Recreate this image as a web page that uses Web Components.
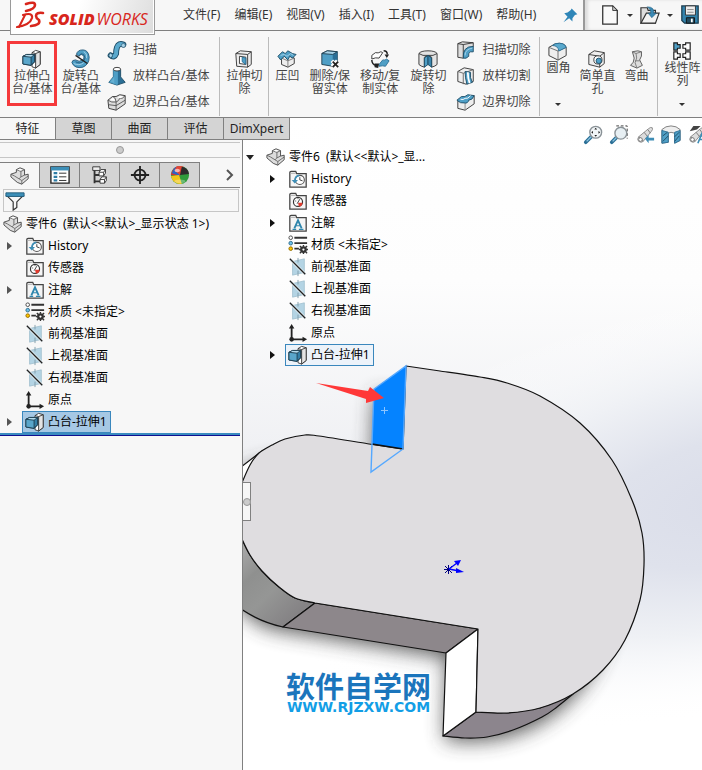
<!DOCTYPE html>
<html lang="zh-CN">
<head>
<meta charset="utf-8">
<title>SOLIDWORKS</title>
<style>
  html, body { margin: 0; height: 100%; }
  body {
    font: 12px/16px "Noto Sans", "Noto Sans CJK SC", sans-serif;
    color: #111; background: #f7f7f7;
    --line: #808080; --soft: #c6c6c6; --panel: #f7f7f7; --tab: #d4d4d4;
  }
</style>
</head>
<body>
<sw-app></sw-app>
<script>
const B = '#4f9fc6', L = '#a9d3e8', D = '#2b6f96', K = '#333';
const plane = `<path d="M4 4l13-3v15l-13 3z" fill="#b4d4e4" stroke="#9dbdcc" stroke-width=".8"/><path d="M10 0v5M10 14v6" stroke="#7f9aa8" fill="none"/><path d="M2 2L18 18" stroke="#e8f0f4" stroke-width="3"/><path d="M1 1L18 18" stroke="#222" stroke-width="1.400"/>`;
const folder = inner => `<path d="M1 19V3q0-1.500 1.500-1.500h5l1 2.500H19v15z" fill="#f5f5f5" stroke="#444" stroke-width="1.400"/><path d="M2 3h5l1 1.500H2z" fill="#bbb"/>${inner}`;
const glass = `<path d="M9 11L2 18" stroke="#2b6f96" stroke-width="4" stroke-linecap="round"/><path d="M8 12L3 17" stroke="#8cc4e0" stroke-width="1.500"/>`;
const scope = `<path d="M3 12L14 3q2-2 4-1 1 2-1 4L8 17q-2 2-5 0-2-2 0-5z" fill="#ddd" stroke="#888"/><path d="M9 7l4 5M13 4l3 4M3 12q4 1 5 5" stroke="#777" fill="none"/><circle cx="5" cy="15" r="2" fill="#fff" stroke="#777"/>`;
const ICONS = {
  extrude: `<path d="M10 3l4-2.500L19 2v14l-5 4-4-1.500z" fill="#fff" stroke="${K}"/><path d="M14 4l5-2v14l-5 4z" fill="#e4e4e4" stroke="${K}"/><path d="M10 3l4 1" stroke="${K}"/><path d="M0 7l4-2h9v8l-4 4-9-1.500z" fill="#357fa6" stroke="#1d3e50"/><path d="M0 7l9 1v9l-9-1.500z" fill="#5aa6ca"/><path d="M0 7l4-2h9L9 8z" fill="#b4dbed"/><path d="M0 7l4-2h9v8l-4 4-9-1.500zM0 7l9 1v9M9 8l4-3" stroke="#1d3e50"/>`,
  revolve: `<path d="M5 5Q6 0 12 0t7 8q0 8-7 11Q3 21 0 14q0-3 4-3 4 3 8 0 2-2 1-4-3-4-5 0z" fill="${B}" stroke="#23597a"/><path d="M8 6q2-3 5-1 3 4 0 7-4 4-9 1" stroke="#23597a" fill="none"/><path d="M13 2q4 2 3 7M2 15q6 3 11-1" stroke="${L}" fill="none"/><path d="M4 6L17 15" stroke="#222" stroke-width="1.400"/>`,
  sweep: `<path d="M3 16q4 3 6-2 0-4 1-7 2-5 7-3" fill="none" stroke="#1d4c66" stroke-width="6.500" stroke-linecap="round"/><path d="M3 16q4 3 6-2 0-4 1-7 2-5 7-3" fill="none" stroke="#5aa9cd" stroke-width="4.500" stroke-linecap="round"/><ellipse cx="3" cy="16" rx="2" ry="2.500" fill="${L}" stroke="#1d4c66"/><circle cx="17" cy="5" r="2.200" fill="${L}" stroke="#1d4c66" stroke-width=".6"/>`,
  loft: `<path d="M6 3h8v8l5 6-9 3-9-3 5-6z" fill="${D}" stroke="#1d4c66"/><path d="M6 3h5v16l-1 1-9-3 5-6z" fill="${B}"/><path d="M3 16l4-5v7z" fill="#66b0d2"/><ellipse cx="10" cy="2.500" rx="4" ry="2" fill="#fff" stroke="${K}"/>`,
  boundary: `<path d="M0 8l5-4q4 1 8-2l6 1v9l-10 7-8-2z" fill="#ddd" stroke="${K}"/><path d="M0 8q4 3 9 2 3-1 4-4 3 1 6-3M9 10v9M5 4q4 1 4 6M1 13l8 1 10-6" fill="none" stroke="#555"/><path d="M2 8l4-3 2 4zM10 5l4-2 3 1-3 2z" fill="#fff"/>`,
  cut: `<path d="M1 4l5-3 12 1v14l-4 3-12-1z" fill="#eee" stroke="${K}"/><path d="M1 4l13 1v14M14 5l4-3" fill="none" stroke="${K}"/><path d="M5 7l7 1v8l-7-1z" fill="#fff" stroke="${K}"/><path d="M8 8l4 1v7l-4-3z" fill="${B}" stroke="${D}"/>`,
  indent: `<path d="M4 9l6-4 8 4v6l-7 4-7-3z" fill="#eee" stroke="${K}"/><path d="M11 11v8M4 9l7 3 7-3" stroke="#777" fill="none"/><path d="M0 7l5-5 3 2 3-3 5 3 4 1-4 4-3-2-2 4-4-4-4 4z" fill="${B}" stroke="#1d4c66"/><path d="M3 6l4-1 3 2 4-3 3 2" stroke="${L}" fill="none"/>`,
  del: `<path d="M1 4l6-3 11 1v12l-5 4-12-2z" fill="${B}" stroke="#1d3e50"/><path d="M13 5l5-3v12l-5 4z" fill="${D}"/><path d="M1 4l6-3 11 1-5 3z" fill="${L}" stroke="#1d3e50"/><path d="M12 12l6 6M18 12l-6 6" stroke="#fff" stroke-width="4"/><path d="M13 13l6 6M19 13l-6 6" stroke="#222" stroke-width="2"/>`,
  move: `<path d="M1 6l4-3q3 1 6-1l2 1-4 6q-4-1-8 1z" fill="#fff" stroke="${K}"/><path d="M9 16l4-5q3 1 4-1l3 2-4 6q-3-1-7 0z" fill="${B}" stroke="${D}"/><path d="M14 1q4 0 4 4" fill="none" stroke="#222" stroke-width="1.600"/><path d="M15 5h5l-2.500 4zM4 15l5 0-1 5-4-1z" fill="#222"/><path d="M1 11q0 5 5 6" fill="none" stroke="#222" stroke-width="1.600"/>`,
  revcut: `<path d="M0 4q2-3 10-3t10 3v12q-2 2-6 3V8l-4-2-4 2v11q-4-1-6-3z" fill="#e3e3e3" stroke="${K}"/><path d="M0 4q4 3 10 2 6 1 10-2" fill="none" stroke="${K}"/><path d="M6 9l4-3v10l-4 3z" fill="${B}" stroke="#1d4c66"/><path d="M10 6l4 3v10l-4-3z" fill="#3b86ad" stroke="#1d4c66"/>`,
  swcut: `<path d="M1 3l5-2 12 1v4L7 19l-6-1z" fill="#ddd" stroke="${K}"/><path d="M1 3l6 1 11-2M7 4v14" stroke="${K}" fill="none"/><path d="M7 19Q6 6 18 6v6h-3q-3 1-2 5l-3 2z" fill="${B}" stroke="#1d4c66"/><path d="M9 16q0-7 8-8" stroke="${L}" fill="none"/>`,
  loftcut: `<path d="M1 5l7-4 10 2v13l-8 3-9-3z" fill="#eee" stroke="${K}"/><path d="M1 5l6 2v12M7 7l11-4" fill="none" stroke="#666"/><path d="M9 5l6 1q-1 6 2 11l-6 2q-2-7-2-14z" fill="${B}" stroke="#1d4c66"/><path d="M12 6q0 7 2 12" stroke="#fff" stroke-width="2" fill="none"/>`,
  boundcut: `<path d="M1 9l18-6v9l-10 7-8-2z" fill="#eee" stroke="${K}"/><path d="M9 11v8" stroke="#888"/><path d="M0 8l5-4q4 1 7-2l7 1q-2 5-6 5-1 4-5 3-4 1-8-3z" fill="${B}" stroke="#1d4c66"/><path d="M4 7q3 1 5-1 3 1 6-3" fill="none" stroke="#fff"/>`,
  fillet: `<path d="M0 6l7-4q10-2 12 4v9l-9 5-10-5z" fill="#eee" stroke="${K}"/><path d="M0 6l10 4v10M10 10l9-4" fill="none" stroke="#666"/><path d="M7 2q10-2 12 4l-8 4Q10 4 4 4z" fill="#5aa9cd" stroke="${D}"/>`,
  hole: `<path d="M1 5l6-4 11 2v12l-5 4-12-3z" fill="#eee" stroke="${K}"/><path d="M1 5l12 2v12M13 7l5-4" fill="none" stroke="${K}"/><circle cx="11" cy="11" r="4.500" fill="#fff" stroke="${K}"/><circle cx="12" cy="12" r="3" fill="${B}" stroke="#1d4c66"/>`,
  flex: `<path d="M6 2l6-1 4 1q1 5-2 9l3 6-6 3-7-3q4-3 4-8z" fill="#ddd" stroke="#555"/><path d="M6 2l4 2q2 5-1 10l2 6M10 4l6-2M9 12l5 0" fill="none" stroke="#777"/>`,
  pattern: `<path d="M1 1h4v2h3v4H5v2H1z" fill="${B}" stroke="#222" stroke-width="1.300"/><path d="M11 3h3V1h5v8h-5V7h-3zM1 11h4v2h3v4H5v2H1zM11 13h3v-2h5v8h-5v-2h-3z" fill="#fff" stroke="#222" stroke-width="1.300"/>`,
  pin: `<path d="M12 2l7 7-3 1-3 4v4l-4-4-7 5 5-7-4-4 4-1 4-3z" fill="#2f86b8"/>`,
  new: `<path d="M2 0h11l5 5v15H2z" fill="#fafafa" stroke="${K}" stroke-width="1.400"/><path d="M13 0v5h5z" fill="#ccc" stroke="${K}"/>`,
  open: `<path d="M0 19V2h7l1 3h8v14z" fill="#ddd" stroke="${K}" stroke-width="1.300"/><path d="M0 19L6 8h14l-4 11z" fill="#f3f3f3" stroke="${K}" stroke-width="1.300"/><path d="M7 1q8 0 7 7h3l-5 5-4-5h3q0-4-4-7z" fill="#3b89b4" stroke="#215f80" stroke-width=".6"/>`,
  save: `<path d="M1 0h18v19H4l-3-3z" fill="#3383ac" stroke="#1d3e50" stroke-width="1.400"/><path d="M5 0h11v10H5z" fill="#eee" stroke="#333"/><path d="M7 4h7M7 7h7" stroke="#888"/><path d="M6 13h9v6H6z" fill="#234c60" stroke="#111"/><path d="M12 14v4" stroke="#fff" stroke-width="2"/>`,
  part: `<path d="M0 8l6-2V3l4-2 5 2v6l4-1v5l-7 6-5-2-7-6z" fill="#ddd" stroke="#444"/><path d="M6 3l5 2v6l-2 2M11 5l4-2M11 11l4-2M0 8l4 2 8 5 7-5M12 15v4" fill="none" stroke="#666"/><path d="M7 3l3-1 3 1-3 1z" fill="#fff"/>`,
  props: `<path d="M0 1h20v18H0z" fill="#fff" stroke="#222" stroke-width="1.500"/><path d="M0 1h20v4H0z" fill="#3c8fb8"/><path d="M3 8h4M3 12h4M3 16h4" stroke="#2f7da6" stroke-width="2.500"/><path d="M9 8h8M9 12h8M9 16h8" stroke="#222"/>`,
  config: `<path d="M4 2v17M4 10h6M4 17h7" stroke="#333" stroke-width="2" fill="none"/><path d="M2 1h8v4H2z" fill="#eee" stroke="#333"/><path d="M9 7l2-3h5v4l-2 3H9zM10 15l2-3h5v4l-2 3h-5z" fill="#fff" stroke="#333"/><path d="M9 7h5v4M14 7l2-3M10 15h5v4M15 15l2-3" fill="none" stroke="#333"/>`,
  target: `<circle cx="10" cy="10" r="6" fill="none" stroke="#222" stroke-width="2"/><path d="M10 0v20M0 10h20" stroke="#222" stroke-width="2"/>`,
  ball: `<circle cx="10" cy="10" r="10" fill="#2f9c3b"/><path d="M10 11L0 10Q1 2 8 0q5 3 2 11z" fill="#d9322b"/><path d="M10 11L1 8q2-6 5-7z" fill="#2c65c4"/><path d="M6 1q5-2 8 0-1 6-4 9l-6-5z" fill="#e34537"/><path d="M10 10L12 1q7 1 8 8z" fill="#2c2c2c"/><path d="M0 11l9-1 3 10Q2 20 0 11z" fill="#f2c61b"/><ellipse cx="7" cy="5" rx="3" ry="2" fill="#fff" opacity=".6"/><ellipse cx="10" cy="17" rx="6" ry="2" fill="#fff" opacity=".3"/>`,
  filter: `<path d="M1 4l7 7v9l4-3v-6l7-7z" fill="#f7f7f7" stroke="#333" stroke-width="1.300"/><path d="M0 1h20v4H0z" fill="#3c8fb8" stroke="#205a79"/>`,
  history: folder(`<circle cx="12" cy="11" r="5" fill="#fff" stroke="#555" stroke-width="1.200"/><path d="M12 8v3l3 1" stroke="#333"/><path d="M6.500 12q0-5 5-6" stroke="#3d8eb6" stroke-width="1.800"/><path d="M3 11h7l-3.500 4z" fill="#3d8eb6"/>`),
  sensor: folder(`<circle cx="10" cy="11" r="5" fill="#fff" stroke="#333" stroke-width="1.300"/><path d="M10 12h5q0 4-4 4z" fill="#e23a2d"/><path d="M9 13l3-5M7 10h1M10 7v1" stroke="#333"/>`),
  note: folder(`<path d="M6 16l4-9 4 9" stroke="#2f86ad" stroke-width="2"/><path d="M7 13h6M4 17h4M11 17h5" stroke="#2f86ad" stroke-width="1.200"/>`),
  material: `<path d="M6 2h14M6 8h14M6 14h5" stroke="#333" stroke-width="2"/><circle cx="2" cy="2" r="2" fill="#fff" stroke="#444"/><circle cx="2" cy="8" r="2" fill="#6dc1ec" stroke="#2f6d8c"/><circle cx="2" cy="14" r="2" fill="#ffc400" stroke="#8f6a00"/><circle cx="16" cy="15" r="2.500" fill="#fff" stroke="#333" stroke-width="2.500"/><path d="M16 10v2M16 18v2M11 15h2M19 15h2M12 11l2 2M18 17l2 2M12 19l2-2M18 13l2-2" stroke="#333" stroke-width="1.500"/>`,
  plane,
  origin: `<path d="M3 3v14h14" stroke="#222" stroke-width="2"/><path d="M0 5l3-5 3 5zM15 14l5 3-5 3z" fill="#222"/><circle cx="3" cy="17" r="2.500" fill="#222"/>`,
  zoomfit: `${glass}<circle cx="13" cy="7" r="6.500" fill="#f1f5f7" stroke="#8a9297" stroke-width="1.500"/><path d="M13 2l1.500 2h-3zM13 12l1.500-2h-3zM8 7l2-1.500v3zM18 7l-2-1.500v3z" fill="#222"/>`,
  zoomarea: `<path d="M7 0h12v14" stroke="#333" stroke-dasharray="3 2"/>${glass}<circle cx="12" cy="8" r="6.500" fill="#e7eff3" stroke="#8a9297" stroke-width="1.500"/>`,
  prev: `${scope}<path d="M10 14l4-4v3h6v3h-6v3z" fill="#3f8db5"/>`,
  section: `<path d="M0 4q4-4 10-4t10 4v12l-6 3V8l-4-1-3 1v10l-7 1z" fill="#eee" stroke="#777"/><path d="M0 5l7 2v11l-7 1z" fill="${B}" stroke="${D}"/><path d="M14 7l6-2v11l-6 3z" fill="${B}" stroke="${D}"/><path d="M1 11l5-4M1 17l6-6M14 12l5-5M14 17l5-6" stroke="#1d4c66"/>`,
  viewA: `${scope}<path d="M2 6l4-6h8l-4 4z" fill="#444"/><path d="M11 19l4-10 4 10M13 15h5" stroke="#3f8db5" stroke-width="1.800"/>`
};

function define(tag, css, html) {
  const tpl = document.createElement('template');
  tpl.innerHTML = `<style>*{box-sizing:border-box}button{font:inherit;color:inherit;background:none;border:0;padding:0;margin:0;text-align:inherit}${css}</style>`;
  customElements.define(tag, class extends HTMLElement {
    connectedCallback() {
      if (this.shadowRoot) return;
      const root = this.attachShadow({ mode: 'open' });
      root.append(tpl.content.cloneNode(true));
      const body = document.createElement('template');
      body.innerHTML = typeof html === 'function' ? html(this) : html;
      root.append(body.content);
    }
  });
}

define('sw-icon', ':host{display:block;flex:none;width:20px;height:20px}svg{display:block;width:100%;height:100%}',
  el => `<svg viewBox="-1 -1 22 22" fill="none" aria-hidden="true">${ICONS[el.getAttribute('name')]}</svg>`);

define('sw-logo', `
  :host{display:flex;align-items:center;gap:4px;width:145px;height:35px;padding:4px 0 0 4px;border:1px solid #9a9a9a;border-top:0;
    background:linear-gradient(110deg,#fff 45%,#dcdcdc);color:#d8261c;box-shadow:inset -1px -1px #fff}
  svg{flex:none;width:30px;height:30px;margin-top:-6px}
  p{display:flex;gap:2px;margin:0;font:italic 16px/20px "Open Sans",sans-serif;white-space:nowrap}
  b{font-weight:800}
  span{font-weight:400}`,
  `<svg viewBox="0 0 30 30" aria-hidden="true"><g fill="none" stroke="#d8261c" stroke-linecap="round" stroke-linejoin="round">
    <path d="M11 3Q20 0 20 4T11 10" stroke-width="2.600"/><path d="M8 14q10-3 9 3-2 7-15 9" stroke-width="2.200"/><path d="M10 14L4 26" stroke-width="2"/>
    <path d="M28 12q-7-1-7 3 0 2 3 4 2 5-8 6" stroke-width="2.600"/></g></svg>
   <p><b>SOLID</b><span>WORKS</span></p>`);

define('sw-menubar', `
  :host{display:flex;height:31px;border-bottom:1px solid var(--line);color:#333;position:relative}
  sw-logo{position:absolute;left:10px;top:0;z-index:2}
  nav{display:flex;flex:1;align-items:center;gap:14px;padding-left:183px;white-space:nowrap;min-width:0}
  sw-icon.pin{width:18px;height:18px;margin-left:11px}
  .quick{display:flex;align-items:center;gap:7px;flex:none;width:119px;padding-left:15px;border-left:2px solid #999;box-shadow:inset 3px 0 3px #ddd;overflow:hidden}
  button{flex:none} i{display:block;border:solid transparent;border-width:3px 3px 0;border-top-color:#333}`,
  `<sw-logo></sw-logo>
   <nav aria-label="主菜单"><button>文件(F)</button><button>编辑(E)</button><button>视图(V)</button><button>插入(I)</button><button>工具(T)</button><button>窗口(W)</button><button>帮助(H)</button>
   <button aria-label="固定"><sw-icon class="pin" name="pin"></sw-icon></button></nav>
   <div class="quick"><button aria-label="新建"><sw-icon name="new"></sw-icon></button><button aria-label="新建选项"><i></i></button>
   <button aria-label="打开"><sw-icon name="open"></sw-icon></button><button aria-label="打开选项"><i></i></button><button aria-label="保存"><sw-icon name="save"></sw-icon></button></div>`);

define('sw-tool', `
  :host{display:block;flex:none;color:#444}
  button{display:flex;flex-direction:column;align-items:center;height:65px;margin-top:4px;padding-top:8px;line-height:13px;text-align:center;white-space:nowrap}
  :host([marked]) button{border:3px solid #f5393b;padding:5px 2px 0}
  :host([menu]) button{height:74px;padding-top:0}
  i{display:none;margin-top:auto;margin-bottom:9px;border:solid transparent;border-width:3px 3px 0;border-top-color:#333}
  :host([menu]) i{display:block}`,
  el => `<button><sw-icon name="${el.getAttribute('icon')}"></sw-icon><span><slot></slot></span><i></i></button>`);

define('sw-row-tool', `:host{display:block;color:#444}button{display:flex;align-items:center;gap:6px;height:20px;white-space:nowrap}`,
  el => `<button><sw-icon name="${el.getAttribute('icon')}"></sw-icon><slot></slot></button>`);

define('sw-group', `
  :host{display:flex;flex:none;gap:var(--gap,9px);height:79px;margin-top:6px;padding:0 9px 0 6px;border-right:1px solid #bbb}
  :host([last]){border:0}
  ::slotted(div){display:flex;flex-direction:column;gap:6px;padding-top:3px}`, `<slot></slot>`);

define('sw-ribbon', `
  :host{display:flex;height:87px;border-bottom:1px solid var(--line);overflow:hidden}
  .boss{--gap:3px;padding-left:7px;padding-right:10px} .boss div{padding-left:3px}
  .one{padding:0 6px}
  .edit{--gap:10px}`,
  `<sw-group class="boss"><sw-tool icon="extrude" marked>拉伸凸<br>台/基体</sw-tool><sw-tool icon="revolve">旋转凸<br>台/基体</sw-tool>
     <div><sw-row-tool icon="sweep">扫描</sw-row-tool><sw-row-tool icon="loft">放样凸台/基体</sw-row-tool><sw-row-tool icon="boundary">边界凸台/基体</sw-row-tool></div></sw-group>
   <sw-group class="one"><sw-tool icon="cut">拉伸切<br>除</sw-tool></sw-group>
   <sw-group class="edit"><sw-tool icon="indent">压凹</sw-tool><sw-tool icon="del">删除/保<br>留实体</sw-tool><sw-tool icon="move">移动/复<br>制实体</sw-tool><sw-tool icon="revcut">旋转切<br>除</sw-tool>
     <div><sw-row-tool icon="swcut">扫描切除</sw-row-tool><sw-row-tool icon="loftcut">放样切割</sw-row-tool><sw-row-tool icon="boundcut">边界切除</sw-row-tool></div></sw-group>
   <sw-group><sw-tool icon="fillet" menu>圆角</sw-tool><sw-tool icon="hole">简单直<br>孔</sw-tool><sw-tool icon="flex">弯曲</sw-tool></sw-group>
   <sw-group last><sw-tool icon="pattern" menu>线性阵<br>列</sw-tool></sw-group>`);

define('sw-tabs', `
  :host{display:flex;height:22px;pointer-events:none}
  button{pointer-events:auto;flex:none;width:56px;text-align:center;border:solid var(--line);border-width:0 0 1px 1px;background:var(--tab);color:#222}
  button[aria-selected]{width:55px;border-left:0;background:var(--panel)}
  button:last-child{width:67px;border-right:1px solid var(--line)}`,
  `<button role="tab" aria-selected="true">特征</button><button role="tab">草图</button><button role="tab">曲面</button><button role="tab">评估</button><button role="tab">DimXpert</button>`);

define('sw-node', `
  :host{display:flex;height:22px;align-items:center}
  .t{flex:none;display:flex;justify-content:center;width:22px;padding-right:3px}
  i{border:solid transparent;border-width:4px 0 4px 5px;border-left-color:var(--arrow,#555)}
  :host([open]) i{border-width:5px 4px 0;border-color:#222 transparent transparent}
  .l{display:flex;align-items:center;gap:3px;height:22px;padding:0 3px 0 2px;border:1px solid transparent;white-space:pre;color:#000}
  :host([root]) .t{display:var(--root-toggle,none);width:20px;padding-right:6px}
  :host([selected]) .l{background:var(--sel,#a6c8e4);border-color:#3a87bd}`,
  el => `${el.hasAttribute('leaf') ? '<span class="t"></span>' : '<button class="t" aria-label="展开"><i></i></button>'}<button class="l"><sw-icon name="${el.getAttribute('icon')}"></sw-icon><slot></slot></button>`);

define('sw-tree', `:host{display:block} .kids{padding-left:var(--indent,0)}`,
  el => `<sw-node root open icon="part"><span>${el.getAttribute('label').replace(/</g, '&lt;')}</span></sw-node>
  <div class="kids"><sw-node icon="history">History</sw-node><sw-node leaf icon="sensor">传感器</sw-node><sw-node icon="note">注解</sw-node>
  <sw-node leaf icon="material">材质 &lt;未指定&gt;</sw-node><sw-node leaf icon="plane">前视基准面</sw-node><sw-node leaf icon="plane">上视基准面</sw-node>
  <sw-node leaf icon="plane">右视基准面</sw-node><sw-node leaf icon="origin">原点</sw-node><sw-node selected icon="extrude">凸台-拉伸1</sw-node></div>`);

define('sw-panel', `
  :host{display:block;background:var(--panel);padding-right:2px}
  .grip{display:flex;justify-content:center;align-items:center;height:16px;margin-top:2px;border:solid var(--soft);border-width:1px 0}
  .grip::before{content:"";width:6px;height:6px;border:1px solid #999;border-radius:50%;background:#ccc}
  .modes{display:flex;height:26px;margin-top:4px;border-bottom:1px solid var(--line)}
  .modes button{display:grid;place-items:center;width:40px;border:solid var(--line);border-width:1px 1px 0 0;background:var(--tab)}
  .modes button[aria-selected]{background:var(--panel);margin-bottom:-1px}
  .modes button:last-child{margin-left:auto;width:20px;border:0;background:none}
  .modes svg{width:10px;height:12px}
  label{display:flex;align-items:center;height:23px;margin:1px 1px 0 3px;padding-left:1px;border:1px solid var(--soft)}
  input{flex:1;min-width:0;border:0;background:none;font:inherit;outline:0}
  sw-tree{margin-top:1px}
  .bar{height:3px;background:#3a8cc0;border-bottom:1px solid #101090}`,
  `<div class="grip"></div>
   <div class="modes" role="tablist"><button role="tab" aria-selected="true" aria-label="特征树"><sw-icon name="part"></sw-icon></button><button role="tab" aria-label="属性"><sw-icon name="props"></sw-icon></button><button role="tab" aria-label="配置"><sw-icon name="config"></sw-icon></button><button role="tab" aria-label="尺寸"><sw-icon name="target"></sw-icon></button><button role="tab" aria-label="外观"><sw-icon name="ball"></sw-icon></button><button aria-label="更多"><svg viewBox="0 0 10 12"><path d="M2 1l5 5-5 5" fill="none" stroke="#555" stroke-width="2"/></svg></button></div>
   <label><sw-icon name="filter"></sw-icon><input type="text" aria-label="过滤"></label>
   <sw-tree label="零件6  (默认<<默认>_显示状态 1>)"></sw-tree><div class="bar"></div>`);

// Smooth cubic segments through a list of points.
const curve = pts => pts.slice(0, -1).map((p, i) => {
  const a = pts[i - 1] || p, b = pts[i + 1], c = pts[i + 2] || b;
  return `C${p[0] + (b[0] - a[0]) / 6} ${p[1] + (b[1] - a[1]) / 6} ${b[0] - (c[0] - p[0]) / 6} ${b[1] - (c[1] - p[1]) / 6} ${b[0]} ${b[1]}`;
}).join('');
const right = [[440,371],[480,377],[507,383],[540,396],[580,423],[612,460],[632,500],[642,533],[644,565],[640,600],[625,640],[603,670],[573,694],[540,708],[507,713],[476,712]];
const low = [[315,603],[295,598],[279,587],[262,571],[250,555],[241,537]];
const high = [[241,485],[250,465],[259,453],[272,445],[285,439],[305,435],[319,436],[369,444]];
const rim = [[443,736],[465,738],[487,737],[513,730],[542,717],[557,707],[573,694]];
const face = `M406 366L440 371${curve(right)}L478 629L315 603${curve(low)}L241 485${curve(high)}L403 449Z`;

define('sw-model', `:host{display:block;overflow:hidden}svg{display:block;width:100%;height:100%}`,
  `<svg aria-hidden="true"><defs>
    <radialGradient id="sky" gradientUnits="userSpaceOnUse" cx="0" cy="0" r="1" gradientTransform="translate(740 500) rotate(-12) scale(480 210)"><stop offset="0" stop-color="#dadde9"/><stop offset=".3" stop-color="#dfe2ec"/><stop offset=".6" stop-color="#eff1f5"/><stop offset="1" stop-color="#fff" stop-opacity="0"/></radialGradient>
    <linearGradient id="haze" x1="0" y1="0" x2="0" y2="1"><stop offset="0" stop-color="#fff"/><stop offset=".25" stop-color="#fdfdfd"/><stop offset=".5" stop-color="#f0f1f4"/><stop offset=".78" stop-color="#fff"/></linearGradient>
    <linearGradient id="round" gradientUnits="userSpaceOnUse" x1="243" y1="550" x2="300" y2="610"><stop offset="0" stop-color="#a6a6a6"/><stop offset=".3" stop-color="#8f908f"/><stop offset=".6" stop-color="#959695"/><stop offset="1" stop-color="#858385"/></linearGradient>
    <filter id="blur" x="-20%" y="-20%" width="140%" height="140%"><feGaussianBlur stdDeviation="10"/></filter></defs>
   <rect width="100%" height="100%" fill="url(#haze)"/>
   <g transform="translate(-243 -118)"><rect x="243" y="118" width="2000" height="2000" fill="url(#sky)"/>
    <path d="${face}" transform="translate(-31 28)" fill="#444" opacity=".9" filter="url(#blur)"/>
    <g stroke="#111" stroke-width="1.200" stroke-linejoin="round">
     <path d="M241 467L262 451L250 470L241 487Z" fill="#fff"/>
     <path d="M315 603${curve(low)}L241 609Q260 622 283 627Z" fill="url(#round)"/>
     <path d="M315 603L478 629L446 653L283 627Z" fill="#8d878b"/>
     <path d="M443 736${curve(rim)}L540 708L507 713L476 712Z" fill="#8c858d"/>
     <path d="M478 629L446 653L443 736L476 712Z" fill="#fff"/>
     <path d="${face}" fill="#dfdde0"/></g>
    <path d="M406 366L374 389L372 444L403 449Z" fill="#0583ff"/>
    <path d="M372 444L403 449" stroke="#111" stroke-width="1.500"/>
    <path d="M403 449L406 366L374 389L371 472Z" fill="none" stroke="#55a8ff" stroke-width="1.400"/>
    <path d="M381 410.500h7M384.500 407v7" stroke="#8cc4ff"/>
    <path d="M316 383L368 391L370 387L384 398L366 403L366 399Z" fill="#ff3838"/>
    <path d="M445 566l7 7M452 566l-7 7M444 569.500h9M448.500 565v9" stroke="#000080"/><path d="M449 569l8-6M449 569l10 2" stroke="#00f" stroke-width="1.300"/><path d="M454 561l7-1-3 6zM456 568l8 4-8 1z" fill="#00f"/>
   </g></svg>`);

define('sw-watermark', `
  :host{display:block;white-space:nowrap;text-align:center;text-shadow:0 0 2px #fff,1px 1px 1px #fff,-1px -1px 1px #fff,1px -1px 1px #fff,-1px 1px 1px #fff}
  strong{display:block;font:bold 29px/30px "Noto Sans CJK SC",sans-serif;color:#1b75bc}
  span{display:block;font:bold 14px/14px "DejaVu Sans",sans-serif;color:#129ee6}`,
  `<strong>软件自学网</strong><span>WWW.RJZXW.COM</span>`);

define('sw-viewport', `
  :host{display:block;position:relative;border-left:1px solid var(--line);overflow:hidden;background:#fff}
  sw-model{position:absolute;inset:0}
  .view{position:relative;display:flex;justify-content:flex-end;gap:6px;height:28px;padding-top:5px}
  .view button:last-child{margin-right:-5px}
  sw-tree{position:relative;width:200px;--root-toggle:flex;--indent:20px;--sel:#edf3fa;--arrow:#111}
  .split{position:absolute;left:-1px;top:364px;width:9px;height:39px;display:grid;place-items:center;border:1px solid var(--line);background:var(--panel)}
  .split::before{content:"";width:6px;height:6px;border:1px solid #999;border-radius:50%;background:#ccc}
  sw-watermark{position:absolute;left:43px;top:552px}`,
  `<sw-model></sw-model>
   <div class="view"><button aria-label="整屏显示"><sw-icon name="zoomfit"></sw-icon></button><button aria-label="局部放大"><sw-icon name="zoomarea"></sw-icon></button><button aria-label="上一视图"><sw-icon name="prev"></sw-icon></button><button aria-label="剖面视图"><sw-icon name="section"></sw-icon></button><button aria-label="视图定向"><sw-icon name="viewA"></sw-icon></button></div>
   <sw-tree label="零件6  (默认<<默认>_显..."></sw-tree>
   <button class="split" aria-label="折叠面板"></button>
   <sw-watermark></sw-watermark>`);

define('sw-app', `
  :host{display:flex;flex-direction:column;min-height:100vh;overflow:hidden}
  main{flex:1;display:grid;grid-template:22px 1fr / 242px minmax(0,1fr)}
  sw-tabs{grid-area:1 / 1 / 2 / 3;z-index:1}
  sw-panel{grid-area:2 / 1}
  sw-viewport{grid-area:1 / 2 / 3 / 3}`,
  `<sw-menubar></sw-menubar><sw-ribbon></sw-ribbon><main><sw-tabs role="tablist"></sw-tabs><sw-panel></sw-panel><sw-viewport></sw-viewport></main>`);
</script>
</body>
</html>
